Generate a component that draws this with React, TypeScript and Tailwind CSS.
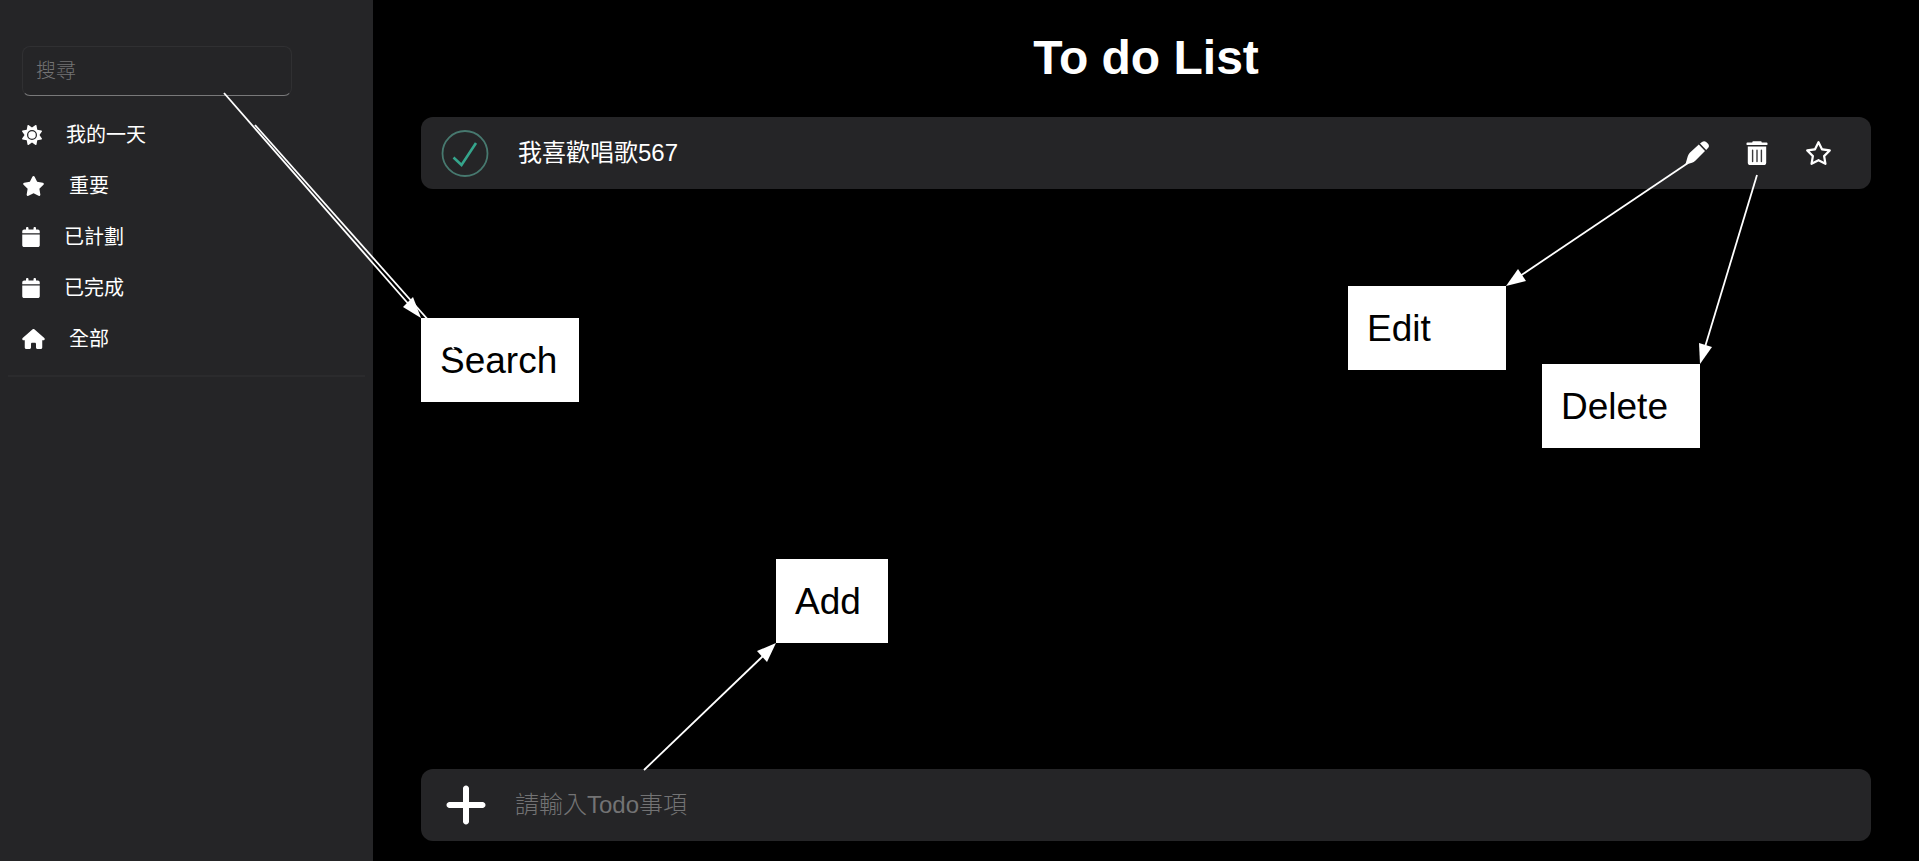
import { useState } from "react";
import type { ComponentType } from "react";
import { FaSun, FaStar, FaCalendar, FaHouse, FaPlus, FaRegStar } from "react-icons/fa6";

type NavItem = { label: string; Icon: ComponentType<{ className?: string }>; size: string };

const navItems: NavItem[] = [
  { label: "我的一天", Icon: FaSun, size: "h-5 w-5" },
  { label: "重要", Icon: FaStar, size: "h-5 w-[23px]" },
  { label: "已計劃", Icon: FaCalendar, size: "h-5 w-[18px]" },
  { label: "已完成", Icon: FaCalendar, size: "h-5 w-[18px]" },
  { label: "全部", Icon: FaHouse, size: "h-5 w-[23px]" },
];

function CheckMark() {
  return (
    <svg viewBox="0 0 48 48" className="size-12" fill="none" aria-hidden="true">
      <circle cx="24" cy="24.5" r="22.5" stroke="#47796f" strokeWidth="1.8" />
      <path d="M12.5 28.5 L20.5 36 L35 14" stroke="#35a58c" strokeWidth="2.6" />
    </svg>
  );
}

function PencilIcon() {
  return (
    <svg viewBox="0 0 24 24" className="size-6" fill="white" aria-hidden="true">
      <path d="M13.8 3.6 L4.8 11.8 Q3.4 13.2 2.7 15.6 L0.3 23.8 L7 21.8 Q8.8 21.2 10.3 19.7 L20 10 Z" />
      <path d="M15 2.6 L17 0.9 Q19.2 -0.6 21.2 1 L23 2.8 Q24.8 4.8 23.2 6.8 L21.2 8.9 Z" />
    </svg>
  );
}

function TrashIcon() {
  return (
    <svg viewBox="0 0 24 24" className="size-6" aria-hidden="true">
      <path
        fill="white"
        d="M8.2 0.2 H15.8 Q16.6 0.2 16.8 1.4 H21.6 Q22.5 1.4 22.5 2.3 V3.2 Q22.5 4.1 21.6 4.1 H2.4 Q1.5 4.1 1.5 3.2 V2.3 Q1.5 1.4 2.4 1.4 H7.2 Q7.4 0.2 8.2 0.2 Z"
      />
      <path fill="white" d="M2.8 5.5 H21.2 V21.4 Q21.2 24 18.6 24 H5.4 Q2.8 24 2.8 21.4 Z" />
      <path stroke="#3a3a3c" strokeWidth="1.4" strokeLinecap="round" d="M7.6 9.2 V20.6 M12 9.2 V20.6 M16.4 9.2 V20.6" />
    </svg>
  );
}

function Sidebar() {
  return (
    <aside className="w-[373px] shrink-0 bg-[#252527] px-2 pt-[46px]">
      <input
        aria-label="搜尋"
        type="text"
        placeholder="搜尋"
        className="ml-[14px] block h-[50px] w-[270px] rounded-lg border border-[#303032] border-b-[#79797a] bg-transparent px-[13px] text-xl font-light placeholder:text-[#737374]"
      />
      <nav className="mt-[13px] border-b-2 border-[#2b2b2d] pb-[11px]">
        <ul>
          {navItems.map(({ label, Icon, size }) => (
            <li key={label}>
              <a href="#" className="flex h-[51px] items-center gap-6 pl-[14px] text-xl">
                <Icon className={size} />
                {label}
              </a>
            </li>
          ))}
        </ul>
      </nav>
    </aside>
  );
}

function TodoRow() {
  return (
    <div className="flex h-[72px] items-center rounded-xl bg-[#252527] pl-[20px] pr-[39px]">
      <button type="button" aria-label="完成">
        <CheckMark />
      </button>
      <span className="ml-[29px] grow text-2xl">我喜歡唱歌567</span>
      <div className="flex items-center gap-9">
        <button type="button" aria-label="編輯"><PencilIcon /></button>
        <button type="button" aria-label="刪除"><TrashIcon /></button>
        <button type="button" aria-label="標示為重要"><FaRegStar className="h-6 w-[27px]" /></button>
      </div>
    </div>
  );
}

function AddRow() {
  const [text, setText] = useState("");
  return (
    <form className="mt-auto flex h-[72px] items-center rounded-xl bg-[#252527] pl-[22px] pr-[40px]">
      <button type="button" aria-label="新增" className="flex w-[46px] justify-center">
        <FaPlus className="size-12" />
      </button>
      <input
        aria-label="請輸入Todo事項"
        placeholder="請輸入Todo事項"
        value={text}
        onChange={(e) => setText(e.target.value)}
        className="ml-[26px] h-12 grow bg-transparent text-2xl font-light outline-none placeholder:text-[#737374]"
      />
    </form>
  );
}

function Annotations() {
  const box = "absolute h-[84px] bg-white pl-[19px] pt-px text-[37px] leading-[84px] text-black";
  return (
    <div className="pointer-events-none absolute inset-0">
      <div className={`${box} left-[421px] top-[318px] w-[158px]`}>Search</div>
      <div className={`${box} left-[1348px] top-[286px] w-[158px]`}>Edit</div>
      <div className={`${box} left-[1542px] top-[364px] w-[158px]`}>Delete</div>
      <div className={`${box} left-[776px] top-[559px] w-[112px]`}>Add</div>
      <svg className="absolute inset-0 size-full" aria-hidden="true">
        <g stroke="white" strokeWidth="1.8" fill="none">
          <path d="M224 93 L412 308" />
          <path d="M255 125 L454 349" />
          <path d="M1688 163 L1520 276" />
          <path d="M1757 175 L1705 347" />
          <path d="M644 770 L763 656" />
        </g>
        <g fill="white">
          <path d="M421 318 L403 307 L413 297 Z" />
          <path d="M1506 286 L1518 269 L1526 281 Z" />
          <path d="M1700 364 L1699 343 L1712 347 Z" />
          <path d="M776 643 L757 651 L767 662 Z" />
        </g>
      </svg>
    </div>
  );
}

export default function App() {
  return (
    <div className="relative h-screen overflow-hidden bg-white pb-1 pr-0.5 font-['Liberation_Sans','Noto_Sans_CJK_TC',sans-serif] text-white">
      <div className="flex h-full bg-black">
        <Sidebar />
        <main className="flex min-w-0 grow flex-col px-12 pb-5 pt-[34px]">
          <h1 className="mb-[35px] text-center text-5xl font-bold">To do List</h1>
          <TodoRow />
          <AddRow />
        </main>
      </div>
      <Annotations />
    </div>
  );
}
